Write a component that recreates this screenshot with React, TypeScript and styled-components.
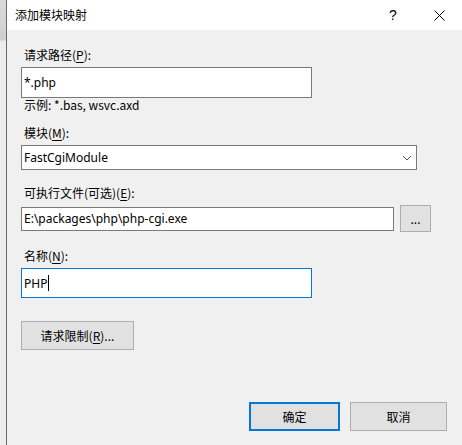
import React from 'react'
import styled, { createGlobalStyle } from 'styled-components'

const GlobalStyle = createGlobalStyle`
	html, body {
		margin: 0;
		padding: 0;
		background: #f0f0f0;
	}
	body {
		font-family: "Noto Sans CJK SC", "Noto Sans", sans-serif;
		font-size: 12px;
		color: #000;
	}
`

const Screen = styled.div`
	display: flex;
	width: 462px;
	height: 445px;
	overflow: hidden;
`

const BackWindow = styled.div`
	width: 6px;
	background: linear-gradient(#dadada 0, #cfcfcf 40px, #ececec 41px);
	border-right: 1px solid #6a6a6a;
	flex-shrink: 0;
`

const Dialog = styled.div`
	flex: 1;
	display: flex;
	flex-direction: column;
	background: #f0f0f0;
`

const TitleBar = styled.div`
	height: 30px;
	background: #fff;
	display: flex;
	align-items: center;
	padding-left: 8px;
	flex-shrink: 0;
`

const Title = styled.div`
	flex: 1;
	font-size: 12px;
	line-height: 16px;
`

const TitleButton = styled.div<{ $w: number }>`
	width: ${(p) => p.$w}px;
	height: 30px;
	display: flex;
	align-items: center;
	justify-content: center;
	font-family: "Liberation Sans", sans-serif;
	font-size: 14px;
`

const Body = styled.div`
	flex: 1;
	display: flex;
	flex-direction: column;
	padding: 0 15px 14px 14px;
`

const Label = styled.div<{ $top: number }>`
	margin-top: ${(p) => p.$top}px;
	padding-left: 3px;
	line-height: 16px;
	height: 16px;
`

const Hint = styled.div`
	padding-left: 3px;
	line-height: 14px;
	margin-top: 0px;
`

const TextBox = styled.div<{ $w: number; $h: number; $focus?: boolean }>`
	box-sizing: border-box;
	width: ${(p) => p.$w}px;
	height: ${(p) => p.$h}px;
	background: #fff;
	border: 1px solid ${(p) => (p.$focus ? '#0078d7' : '#7a7a7a')};
	display: flex;
	align-items: center;
	padding-left: 2px;
	font-size: 12px;
	font-family: "Noto Sans", "Noto Sans CJK SC", sans-serif;
`

const Caret = styled.span`
	display: inline-block;
	width: 1px;
	height: 16px;
	background: #000;
	margin-left: 1px;
`

const Select = styled(TextBox)`
	justify-content: space-between;
	padding-right: 4px;
`

const Row = styled.div<{ $top: number }>`
	display: flex;
	align-items: center;
	gap: 6px;
	margin-top: ${(p) => p.$top}px;
`

const Button = styled.button<{ $w: number; $primary?: boolean }>`
	box-sizing: border-box;
	width: ${(p) => p.$w}px;
	height: 29px;
	background: #e1e1e1;
	border: ${(p) => (p.$primary ? '2px solid #0078d7' : '1px solid #adadad')};
	font-family: "Noto Sans CJK SC", "Noto Sans", sans-serif;
	font-size: 12px;
	color: #000;
	padding: 0;
	display: flex;
	align-items: center;
	justify-content: center;
`

const Spacer = styled.div<{ $h: number }>`
	height: ${(p) => p.$h}px;
	flex-shrink: 0;
`

const Footer = styled.div`
	margin-top: auto;
	display: flex;
	justify-content: flex-end;
	gap: 10px;
`

const U = styled.span`
	text-decoration: underline;
	text-underline-offset: 2px;
`

const Chevron = () => (
	<svg width="10" height="6" viewBox="0 0 10 6">
		<polyline points="1,1 5,5 9,1" fill="none" stroke="#555" strokeWidth="1" />
	</svg>
)

const CloseIcon = () => (
	<svg width="11" height="11" viewBox="0 0 11 11">
		<line x1="0.5" y1="0.5" x2="10.5" y2="10.5" stroke="#000" strokeWidth="1" />
		<line x1="10.5" y1="0.5" x2="0.5" y2="10.5" stroke="#000" strokeWidth="1" />
	</svg>
)

export default function App() {
	return (
		<>
			<GlobalStyle />
			<Screen>
				<BackWindow />
				<Dialog>
					<TitleBar>
						<Title>添加模块映射</Title>
						<TitleButton $w={46}>?</TitleButton>
						<TitleButton $w={46}>
							<CloseIcon />
						</TitleButton>
					</TitleBar>
					<Body>
						<Label $top={17}>
							请求路径(<U>P</U>):
						</Label>
						<Spacer $h={4} />
						<TextBox $w={291} $h={31}>*.php</TextBox>
						<Hint>示例: *.bas, wsvc.axd</Hint>
						<Label $top={13}>
							模块(<U>M</U>):
						</Label>
						<Spacer $h={4} />
						<Select $w={396} $h={25}>
							<span>FastCgiModule</span>
							<Chevron />
						</Select>
						<Label $top={15}>
							可执行文件(可选)(<U>E</U>):
						</Label>
						<Row $top={4}>
							<TextBox $w={373} $h={24}>E:\packages\php\php-cgi.exe</TextBox>
							<Button $w={31} style={{ height: 27 }}>...</Button>
						</Row>
						<Label $top={16}>
							名称(<U>N</U>):
						</Label>
						<Spacer $h={4} />
						<TextBox $w={291} $h={30} $focus>
							PHP
							<Caret />
						</TextBox>
						<Spacer $h={23} />
						<Button $w={113}>
							请求限制(<U>R</U>)...
						</Button>
						<Footer>
							<Button $w={91} $primary>
								确定
							</Button>
							<Button $w={97}>取消</Button>
						</Footer>
					</Body>
				</Dialog>
			</Screen>
		</>
	)
}
